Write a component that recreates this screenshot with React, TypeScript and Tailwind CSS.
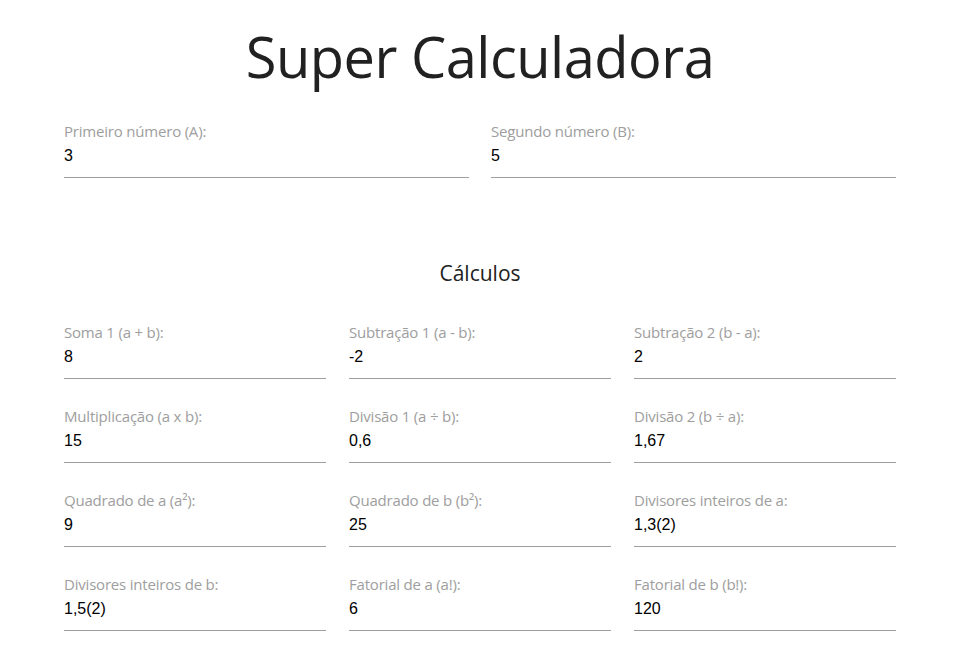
const calcs = [
  ['Soma 1 (a + b):', '8'],
  ['Subtração 1 (a - b):', '-2'],
  ['Subtração 2 (b - a):', '2'],
  ['Multiplicação (a x b):', '15'],
  ['Divisão 1 (a ÷ b):', '0,6'],
  ['Divisão 2 (b ÷ a):', '1,67'],
  ['Quadrado de a (a²):', '9'],
  ['Quadrado de b (b²):', '25'],
  ['Divisores inteiros de a:', '1,3(2)'],
  ['Divisores inteiros de b:', '1,5(2)'],
  ['Fatorial de a (a!):', '6'],
  ['Fatorial de b (b!):', '120'],
]

function Field({ label, value }: { label: string; value: string }) {
  return (
    <div className="flex flex-col border-b border-[#9e9e9e] pb-[11px]">
      <span className="text-[15px] leading-[18px] text-[#9e9e9e] font-['Open_Sans',sans-serif] tracking-[-0.2px]">{label}</span>
      <span className="mt-[6px] text-[16px] leading-[20px] text-black font-['Liberation_Sans',Arial,sans-serif]">{value}</span>
    </div>
  )
}

export default function App() {
  return (
    <div className="min-h-screen bg-white">
      <div className="ml-[64px] w-[832px] pt-[20px]">
        <h1 className="text-center text-[56px] leading-[72px] tracking-[-0.5px] text-[#212121] font-['Open_Sans',sans-serif]">Super Calculadora</h1>
        <div className="mt-[30px] grid grid-cols-2 gap-x-[22px]">
          <Field label="Primeiro número (A):" value="3" />
          <Field label="Segundo número (B):" value="5" />
        </div>
        <h2 className="mt-[81px] text-center text-[21px] leading-[28px] text-[#212121] font-['Open_Sans',sans-serif]">Cálculos</h2>
        <div className="mt-[36px] grid grid-cols-3 gap-x-[23px] gap-y-[28px]">
          {calcs.map(([l, v]) => (
            <Field key={l} label={l} value={v} />
          ))}
        </div>
      </div>
    </div>
  )
}
